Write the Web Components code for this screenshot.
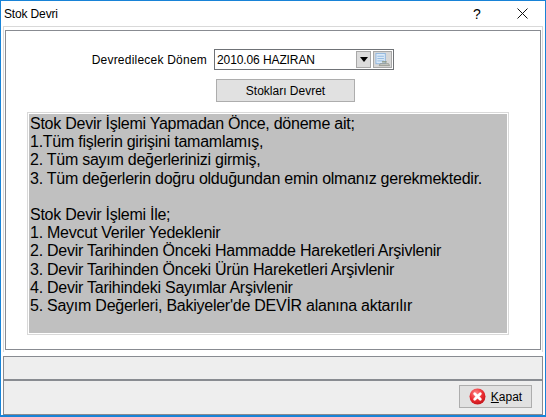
<!DOCTYPE html>
<html lang="tr">
<head>
<meta charset="utf-8">
<title>Stok Devri</title>
<style>
  html, body { margin: 0; padding: 0; background: #fff; }
  body { font: 12px "Liberation Sans", Arial, sans-serif; color: #000; }
</style>
</head>
<body>
<stok-dialog caption="Stok Devri">
  <period-select label="Devredilecek Dönem" value="2010.06 HAZIRAN"></period-select>
  <flat-button class="run">Stokları Devret</flat-button>
  <info-box>Stok Devir İşlemi Yapmadan Önce, döneme ait;
1.Tüm fişlerin girişini tamamlamış,
2. Tüm sayım değerlerinizi girmiş,
3. Tüm değerlerin doğru olduğundan emin olmanız gerekmektedir.

Stok Devir İşlemi İle;
1. Mevcut Veriler Yedeklenir
2. Devir Tarihinden Önceki Hammadde Hareketleri Arşivlenir
3. Devir Tarihinden Önceki Ürün Hareketleri Arşivlenir
4. Devir Tarihindeki Sayımlar Arşivlenir
5. Sayım Değerleri, Bakiyeler'de DEVİR alanına aktarılır</info-box>
  <flat-button slot="footer" class="close" icon="close"><u>K</u>apat</flat-button>
</stok-dialog>

<script>
  var define = (name, markup, init) => {
    var template = document.createElement("template");
    template.innerHTML = markup;
    customElements.define(name, class extends HTMLElement {
      constructor() {
        super();
        this.attachShadow({ mode: "open" }).appendChild(template.content.cloneNode(true));
      }
      connectedCallback() {
        if (init) init(this, this.shadowRoot);
      }
    });
  };

  define("stok-dialog", `
    <style>
      :host {
        display: flex;
        flex-direction: column;
        box-sizing: border-box;
        width: 546px;
        height: 417px;
        border: 1px solid #1883d7;
        border-bottom-width: 2px;
        background: #fff;
      }
      .title {
        display: flex;
        align-items: center;
        height: 25px;
        flex: none;
      }
      .caption { margin-left: 3px; padding-top: 1px; letter-spacing: -.15px; }
      .help { margin-left: auto; width: 44px; text-align: center; font-size: 14px; padding-top: 1px; }
      .x { display: flex; justify-content: center; width: 46px; }
      .outer {
        flex: none;
        height: 326px;
        margin: 0 2px;
        border: 1px solid #d9d9d9;
        border-bottom: 0;
        padding: 3px 1px 0;
        box-sizing: border-box;
      }
      .inner {
        box-sizing: border-box;
        height: 320px;
        border: 1px solid #888b91;
        display: flex;
        flex-direction: column;
        padding: 18px 32px 0 21px;
      }
      .inner ::slotted(flat-button) { align-self: flex-start; margin: 9px 0 10px 189px; }
      .foot {
        flex: none;
        margin: 4px 2px 0;
        height: 59px;
        box-sizing: border-box;
        border: 1px solid #888b91;
        background: #eeeeee;
        display: flex;
        flex-direction: column;
      }
      .status { height: 24px; box-sizing: border-box; flex: none; border-bottom: 2px solid #888b91; }
      .actions { flex: 1; display: flex; justify-content: flex-end; padding: 4px 10px 0 0; }
    </style>
    <div class="title">
      <span class="caption"></span>
      <span class="help">?</span>
      <span class="x">
        <svg width="11" height="11" viewBox="0 0 11 11"><path d="M.5.5l10 10M10.5.5l-10 10" stroke="#111" stroke-width="1" fill="none"/></svg>
      </span>
    </div>
    <div class="outer">
      <div class="inner"><slot></slot></div>
    </div>
    <div class="foot">
      <div class="status"></div>
      <div class="actions"><slot name="footer"></slot></div>
    </div>
  `, (el, root) => {
    root.querySelector(".caption").textContent = el.getAttribute("caption");
  });

  define("period-select", `
    <style>
      :host { display: flex; align-items: center; height: 21px; }
      .label { width: 180px; text-align: right; padding-right: 7px; flex: none; letter-spacing: .22px; }
      .box {
        box-sizing: border-box;
        width: 180px;
        height: 21px;
        border: 1px solid #6f7276;
        display: flex;
        align-items: center;
        padding: 0 1px 0 2px;
        background: #fff;
      }
      .value { flex: 1; letter-spacing: -.1px; }
      .drop {
        box-sizing: border-box;
        width: 15px;
        height: 17px;
        background: #dcdcdc;
        border: 1px solid #a8a8a8;
        display: flex;
        align-items: center;
        justify-content: center;
      }
      .drop i { border: 4px solid transparent; border-top: 5px solid #000; border-bottom: 0; }
      .pick {
        box-sizing: border-box;
        width: 19px;
        height: 17px;
        margin-left: 2px;
        background: #d8d8d8;
        border: 1px solid #a8a8a8;
      }
      svg { display: block; }
    </style>
    <span class="label"></span>
    <div class="box">
      <span class="value"></span>
      <span class="drop"><i></i></span>
      <span class="pick">
        <svg width="17" height="15" viewBox="0 0 17 16">
          <rect x="1.5" y="1.5" width="10" height="11" fill="#dceaf8" stroke="#8fb6de"/>
          <path d="M3 4.5h7M3 7h7M3 9.5h7" stroke="#8fb6de"/>
          <path d="M6 12.5h9l1 2H5z" fill="#cfcfc8" stroke="#8a8e86" stroke-width=".8"/>
          <path d="M8 10.5h5" stroke="#8a9480" stroke-width="1.4"/>
        </svg>
      </span>
    </div>
  `, (el, root) => {
    root.querySelector(".label").textContent = el.getAttribute("label");
    root.querySelector(".value").textContent = el.getAttribute("value");
  });

  define("flat-button", `
    <style>
      :host {
        box-sizing: border-box;
        display: inline-flex;
        align-items: center;
        justify-content: center;
        border: 1px solid #adadad;
        background: #e1e1e1;
      }
      :host(.run) { width: 139px; height: 23px; }
      :host(.close) { width: 73px; height: 23px; }
      svg { display: none; margin-right: 5px; }
      :host([icon]) svg { display: block; }
    </style>
    <svg width="17" height="17" viewBox="0 0 17 17">
      <defs>
        <radialGradient id="g" cx=".4" cy=".3" r=".8">
          <stop offset="0" stop-color="#ff8a8a"/>
          <stop offset=".55" stop-color="#ea2a2f"/>
          <stop offset="1" stop-color="#b80f16"/>
        </radialGradient>
      </defs>
      <circle cx="8.5" cy="8.5" r="8" fill="url(#g)"/>
      <path d="M5.7 5.7l5.6 5.6M11.3 5.7l-5.6 5.6" stroke="#fff" stroke-width="2.8" stroke-linecap="round"/>
    </svg>
    <slot></slot>
  `);

  define("info-box", `
    <style>
      :host {
        display: block;
        box-sizing: border-box;
        width: 482px;
        height: 223px;
        border: 1px solid #d9d9d9;
        background: #c0c0c0;
        box-shadow: inset 0 0 0 1px #fff;
        font-size: 16px;
        letter-spacing: -.25px;
        line-height: 18.2px;
        padding: 2px 2px 0;
        color: #000;
      }
      .text { white-space: pre-line; }
    </style>
    <div class="text"><slot></slot></div>
  `);
</script>
</body>
</html>
